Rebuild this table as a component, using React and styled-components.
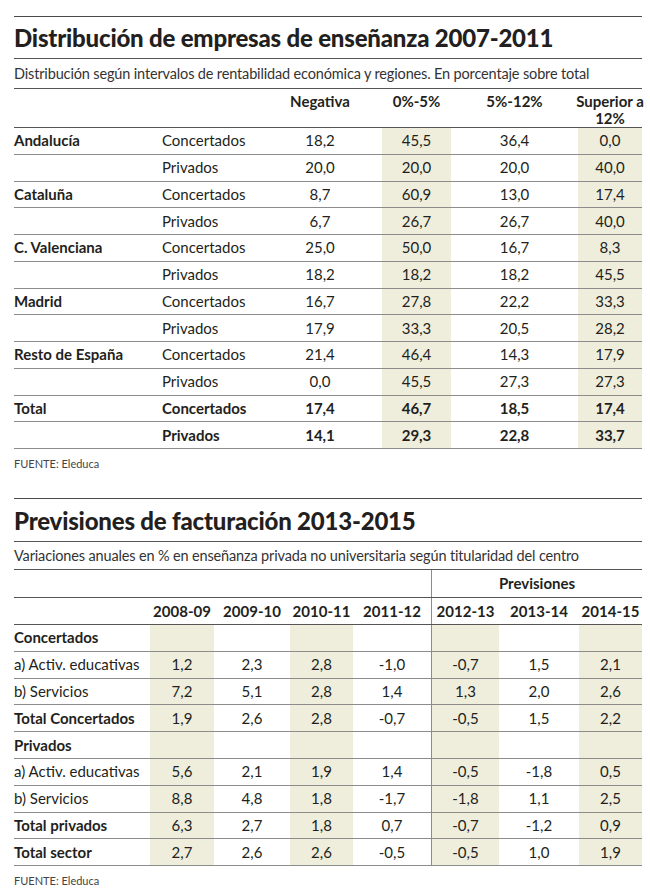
import React from "react";
import styled, { createGlobalStyle } from "styled-components";

const GlobalStyle = createGlobalStyle`
  body {
    margin: 0;
    background: #ffffff;
    color: #231f20;
    font-family: Lato, "Open Sans", "Liberation Sans", sans-serif;
  }
`;

const Page = styled.div`
  width: 628px;
  padding: 16px 8px 0 14px;
`;

const Section = styled.section`
  border-top: 1px solid #4a4a4a;
  margin-top: ${(p) => p.$gap || 0}px;
`;

const Title = styled.h2`
  margin: 0;
  height: ${(p) => p.$h}px;
  display: flex;
  align-items: center;
  font-size: 24px;
  font-weight: 900;
  letter-spacing: -0.2px;
  border-bottom: 1px solid #555;
`;

const Subtitle = styled.div`
  height: ${(p) => p.$h}px;
  display: flex;
  align-items: center;
  font-size: 14.5px;
  letter-spacing: -0.15px;
  color: #333;
  border-bottom: 1px solid #555;
`;

const Row = styled.div`
  display: grid;
  grid-template-columns: ${(p) => p.$cols};
  height: ${(p) => p.$h}px;
  box-sizing: border-box;
  border-bottom: 1px solid ${(p) => (p.$strong ? "#555" : "#8c8c8c")};
  font-size: 15px;
`;

const Cell = styled.div`
  display: flex;
  align-items: ${(p) => (p.$top ? "flex-start" : "center")};
  justify-content: ${(p) => (p.$left ? "flex-start" : "center")};
  text-align: center;
  line-height: 17px;
  padding-top: ${(p) => (p.$top ? 4 : 0)}px;
  box-sizing: border-box;
  background: ${(p) => (p.$shade ? "#efeedd" : "transparent")};
  font-weight: ${(p) => (p.$bold ? 700 : 400)};
  border-left: ${(p) => (p.$divider ? "1px solid #8c8c8c" : "none")};
  grid-column: ${(p) => p.$span || "auto"};
  white-space: nowrap;
`;

const Stack = styled.span`
  display: block;
  line-height: 17px;
`;

const Source = styled.div`
  height: 28px;
  display: flex;
  align-items: center;
  font-size: 11px;
  color: #444;
`;

const COLS1 = "148px 96px 124px 69px 127px 64px";
const SHADE1 = [false, false, false, true, false, true];

const dist = [
  ["Andalucía", "Concertados", "18,2", "45,5", "36,4", "0,0"],
  ["", "Privados", "20,0", "20,0", "20,0", "40,0"],
  ["Cataluña", "Concertados", "8,7", "60,9", "13,0", "17,4"],
  ["", "Privados", "6,7", "26,7", "26,7", "40,0"],
  ["C. Valenciana", "Concertados", "25,0", "50,0", "16,7", "8,3"],
  ["", "Privados", "18,2", "18,2", "18,2", "45,5"],
  ["Madrid", "Concertados", "16,7", "27,8", "22,2", "33,3"],
  ["", "Privados", "17,9", "33,3", "20,5", "28,2"],
  ["Resto de España", "Concertados", "21,4", "46,4", "14,3", "17,9"],
  ["", "Privados", "0,0", "45,5", "27,3", "27,3"],
  ["Total", "Concertados", "17,4", "46,7", "18,5", "17,4", true],
  ["", "Privados", "14,1", "29,3", "22,8", "33,7", true],
];

const COLS2 = "136px 64px 76px 63px 78px 68px 80px 63px";
const SHADE2 = [false, true, false, true, false, true, false, true];
const years = ["2008-09", "2009-10", "2010-11", "2011-12", "2012-13", "2013-14", "2014-15"];

const fact = [
  ["Concertados", [], true],
  ["a) Activ. educativas", ["1,2", "2,3", "2,8", "-1,0", "-0,7", "1,5", "2,1"]],
  ["b) Servicios", ["7,2", "5,1", "2,8", "1,4", "1,3", "2,0", "2,6"]],
  ["Total Concertados", ["1,9", "2,6", "2,8", "-0,7", "-0,5", "1,5", "2,2"], true],
  ["Privados", [], true],
  ["a) Activ. educativas", ["5,6", "2,1", "1,9", "1,4", "-0,5", "-1,8", "0,5"]],
  ["b) Servicios", ["8,8", "4,8", "1,8", "-1,7", "-1,8", "1,1", "2,5"]],
  ["Total privados", ["6,3", "2,7", "1,8", "0,7", "-0,7", "-1,2", "0,9"], true],
  ["Total sector", ["2,7", "2,6", "2,6", "-0,5", "-0,5", "1,0", "1,9"], true],
];

function DistTable() {
  return (
    <>
      <Row $cols={COLS1} $h={39} $strong>
        <Cell />
        <Cell />
        <Cell $top $bold>Negativa</Cell>
        <Cell $top $bold>0%-5%</Cell>
        <Cell $top $bold>5%-12%</Cell>
        <Cell $top $bold>
          <Stack>
            Superior a
            <br />
            12%
          </Stack>
        </Cell>
      </Row>
      {dist.map((r, i) => (
        <Row key={i} $cols={COLS1} $h={26.75}>
          <Cell $left $bold>{r[0]}</Cell>
          <Cell $left $bold={r[6]}>{r[1]}</Cell>
          {r.slice(2, 6).map((v, j) => (
            <Cell key={j} $shade={SHADE1[j + 2]} $bold={r[6]}>
              {v}
            </Cell>
          ))}
        </Row>
      ))}
    </>
  );
}

function FactTable() {
  return (
    <>
      <Row $cols={COLS2} $h={28} $strong>
        <Cell $span="1 / 6" />
        <Cell $span="6 / 9" $divider $bold>Previsiones</Cell>
      </Row>
      <Row $cols={COLS2} $h={27} $strong>
        <Cell />
        {years.map((y, j) => (
          <Cell key={y} $bold $divider={j === 4}>
            {y}
          </Cell>
        ))}
      </Row>
      {fact.map((r, i) => (
        <Row key={i} $cols={COLS2} $h={26.8}>
          <Cell $left $bold={r[2]}>{r[0]}</Cell>
          {years.map((y, j) => (
            <Cell key={y} $shade={SHADE2[j + 1]} $divider={j === 4}>
              {r[1][j] || ""}
            </Cell>
          ))}
        </Row>
      ))}
    </>
  );
}

export default function App() {
  return (
    <Page>
      <GlobalStyle />
      <Section>
        <Title $h={41}>Distribución de empresas de enseñanza 2007-2011</Title>
        <Subtitle $h={29}>
          Distribución según intervalos de rentabilidad económica y regiones. En porcentaje sobre total
        </Subtitle>
        <DistTable />
        <Source>FUENTE: Eleduca</Source>
      </Section>
      <Section $gap={21}>
        <Title $h={42}>Previsiones de facturación 2013-2015</Title>
        <Subtitle $h={27}>
          Variaciones anuales en % en enseñanza privada no universitaria según titularidad del centro
        </Subtitle>
        <FactTable />
        <Source>FUENTE: Eleduca</Source>
      </Section>
    </Page>
  );
}
